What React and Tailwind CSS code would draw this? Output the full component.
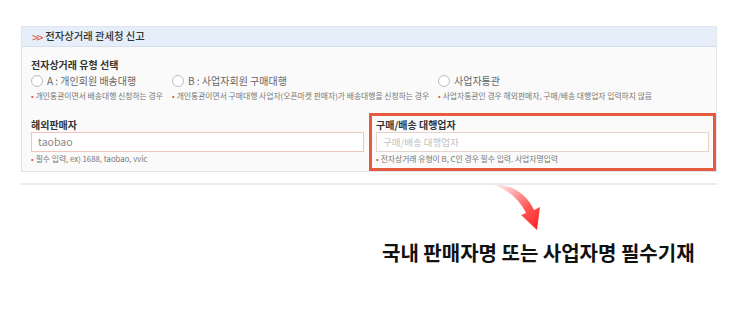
import React from "react";

const font = { fontFamily: '"Noto Sans CJK KR", "Noto Sans", sans-serif' };

function Radio({ label }) {
    return (
        <div className="flex items-center gap-[4px] h-[14px]">
            <span className="w-[12px] h-[12px] rounded-full border border-[#b9bec6] bg-white shrink-0"></span>
            <span className="text-[10px] text-[#666] leading-none">{label}</span>
        </div>
    )
}

function Note({ children }) {
    return (
        <div className="flex items-center gap-[2px] text-[7.8px] text-[#777] leading-none whitespace-nowrap">
            <span className="text-[#e0503a]">•</span>
            <span>{children}</span>
        </div>
    )
}

export default function App() {
    return (
        <div className="w-[738px] h-[314px] bg-white pt-[26px] overflow-hidden" style={font}>
            <div className="mx-[21px] border border-[#dfe5ec]">
                <div className="h-[20px] bg-[#e6eff9] border-b border-[#d6dfea] flex items-center pl-[10px] gap-[4px]">
                    <span className="text-[#e0503a] text-[12px] leading-none tracking-[-2px]">&gt;&gt;</span>
                    <span className="text-[10.3px] font-medium text-[#333] leading-none">전자상거래 관세청 신고</span>
                </div>
                <div className="bg-[#fafafa]">
                    <div className="pl-[9px] pt-[13px]">
                        <div className="text-[10px] font-bold text-[#333] leading-none h-[11px]">전자상거래 유형 선택</div>
                        <div className="grid grid-cols-[141px_266px_1fr] mt-[3px]">
                            <Radio label="A : 개인회원 배송대행" />
                            <Radio label="B : 사업자회원 구매대행" />
                            <Radio label="사업자통관" />
                        </div>
                        <div className="grid grid-cols-[141px_266px_1fr] mt-[4px]">
                            <Note>개인통관이면서 배송대행 신청하는 경우</Note>
                            <Note>개인통관이면서 구매대행 사업자(오픈마켓 판매자)가 배송대행을 신청하는 경우</Note>
                            <Note>사업자통관인 경우 해외판매자, 구매/배송 대행업자 입력하지 않음</Note>
                        </div>
                    </div>
                    <div className="grid grid-cols-[347px_1fr] mt-[13px]">
                        <div className="pl-[9px] pt-[7px]">
                            <div className="text-[10px] font-bold text-[#333] leading-none h-[11px]">해외판매자</div>
                            <div className="mt-[1px] w-[333px] h-[20px] border border-[#f0c6b8] bg-white flex items-center px-[6px] text-[10.5px] text-[#888]">taobao</div>
                            <div className="mt-[3px] pb-[8px]"><Note>필수 입력, ex) 1688, taobao, vvic</Note></div>
                        </div>
                        <div className="border-[3px] border-[#e65b3e] pl-[4px] pt-[4px]">
                            <div className="text-[10px] font-bold text-[#333] leading-none h-[11px]">구매/배송 대행업자</div>
                            <div className="mt-[1px] w-[333px] h-[20px] border border-[#e8d2cc] bg-white flex items-center px-[6px] text-[9.5px] text-[#c3c3c3]">구매/배송 대행업자</div>
                            <div className="mt-[3px]"><Note>전자상거래 유형이 B, C인 경우 필수 입력. 사업자명입력</Note></div>
                        </div>
                    </div>
                </div>
            </div>
            <div className="mx-[21px] mt-[11px] h-[2px] bg-[#e9eaf1]"></div>
            <div className="pl-[488px] h-[50px]">
                <svg width="60" height="50" viewBox="0 0 60 50">
                    <defs>
                        <linearGradient id="arr" x1="0" y1="0" x2="1" y2="1">
                            <stop offset="0" stopColor="#ff3b3b" stopOpacity="0.05" />
                            <stop offset="0.6" stopColor="#ff3030" stopOpacity="0.8" />
                            <stop offset="1" stopColor="#ff1a1a" />
                        </linearGradient>
                    </defs>
                    <path d="M6 0 Q28 8 38 28 L33 30 L49 45 L52 22 L46 25 Q36 4 14 0 Z" fill="url(#arr)" />
                </svg>
            </div>
            <div className="pl-[382px] mt-[8px] text-[20px] font-bold text-[#111] leading-none">국내 판매자명 또는 사업자명 필수기재</div>
        </div>
    )
}
